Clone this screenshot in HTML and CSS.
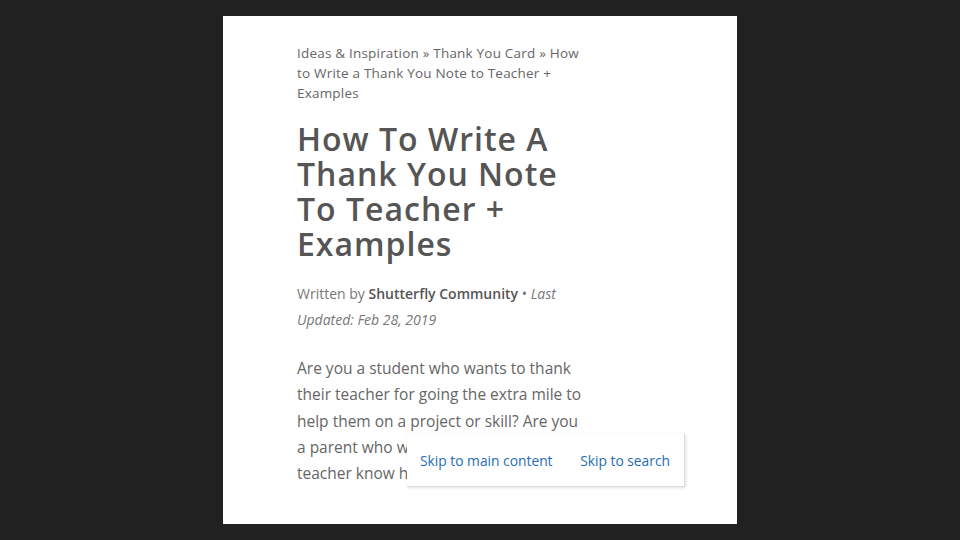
FILE: index.html
```html
<!DOCTYPE html>
<html lang="en">
<head>
    <meta charset="UTF-8">
    <meta name="viewport" content="width=device-width, initial-scale=1.0">
    <title>How To Write A Thank You Note To Teacher + Examples</title>
    <link rel="stylesheet" href="styles.css">
</head>
<body>
    <div class="page">
        <div class="article">
            <nav class="breadcrumb">
                <a href="#">Ideas &amp; Inspiration</a> &raquo; <a href="#">Thank You Card</a> &raquo; How to Write a Thank You Note to Teacher + Examples
            </nav>

            <h1>How To Write A Thank You Note To Teacher + Examples</h1>

            <p class="meta">
                Written by <strong>Shutterfly Community</strong> &bull; <em>Last Updated: Feb 28, 2019</em>
            </p>

            <p class="intro">
                Are you a student who wants to thank their teacher for going the extra mile to help them on a project or skill? Are you a parent who wants to let your kid's teacher know how much you care?
            </p>
        </div>

        <div class="skip-links">
            <a href="#main">Skip to main content</a>
            <a href="#search">Skip to search</a>
        </div>
    </div>
</body>
</html>
```

FILE: styles.css
```css
body {
    margin: 0;
    background-color: #212121;
    font-family: "Open Sans", Arial, sans-serif;
}
.page {
    position: relative;
    width: 514px;
    height: 508px;
    margin: 16px auto 0;
    background-color: #fff;
    overflow: hidden;
}
.article {
    padding: 27px 0 0 74px;
    width: 292px;
    color: #666;
}
.breadcrumb {
    font-size: 13.5px;
    line-height: 20px;
    letter-spacing: 0.2px;
    color: #666;
}
.breadcrumb a {
    color: #666;
    text-decoration: none;
}
h1 {
    margin: 18px 0 0;
    font-size: 32px;
    line-height: 35px;
    font-weight: 600;
    letter-spacing: 1px;
    color: #555;
}
.meta {
    margin: 20px 0 0;
    font-size: 14px;
    line-height: 26px;
    color: #777;
}
.meta strong {
    font-weight: 600;
    color: #555;
}
.meta em {
    color: #777;
}
.intro {
    margin: 22px 0 0;
    font-size: 15.5px;
    line-height: 26.3px;
    color: #666;
}
.skip-links {
    position: absolute;
    left: 184px;
    top: 418px;
    width: 278px;
    height: 53px;
    box-sizing: border-box;
    padding: 0 14px 0 13px;
    display: flex;
    align-items: center;
    justify-content: space-between;
    background-color: #fff;
    border-right: 1px solid #ddd;
    border-bottom: 1px solid #ddd;
    box-shadow: 1px 1px 3px rgba(0, 0, 0, 0.12);
}
.skip-links a {
    font-size: 13.8px;
    color: #1f6db3;
    text-decoration: none;
}
```
